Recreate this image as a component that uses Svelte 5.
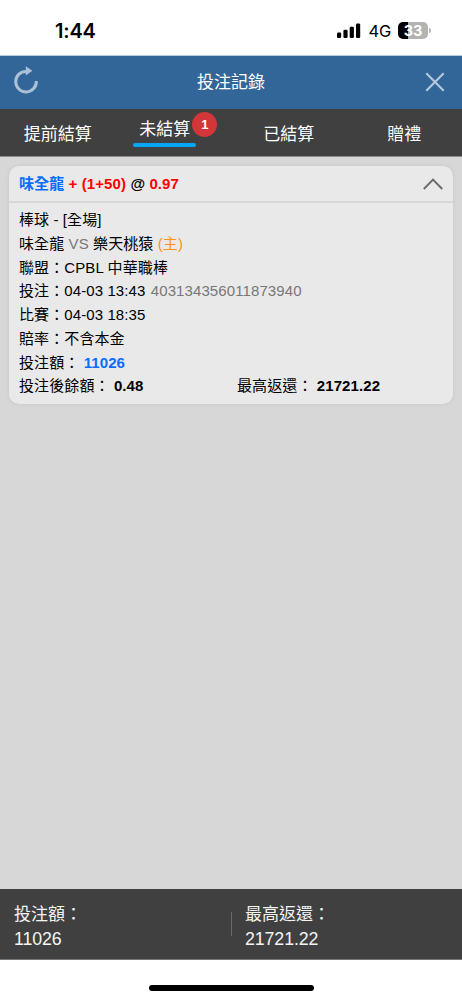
<script lang="ts">
  type Tab = { id: string; label: string; count?: number }

  const tabs: Tab[] = [
    { id: 'early', label: '提前結算' },
    { id: 'open', label: '未結算', count: 1 },
    { id: 'settled', label: '已結算' },
    { id: 'gift', label: '贈禮' },
  ]

  const bet = {
    pick: '味全龍',
    line: '+ (1+50)',
    odds: '0.97',
    market: '棒球 - [全場]',
    home: '樂天桃猿',
    away: '味全龍',
    league: 'CPBL 中華職棒',
    placedAt: '04-03 13:43',
    ticket: '403134356011873940',
    startsAt: '04-03 18:35',
    oddsType: '不含本金',
    stake: '11026',
    remaining: '0.48',
    maxReturn: '21721.22',
  }

  let active = $state('open')
  let expanded = $state(true)
</script>

<div class="screen">
  <div class="status-bar">
    <span class="time">1:44</span>
    <div class="indicators">
      <svg class="signal" width="24" height="16" viewBox="0 0 24 16" aria-hidden="true">
        <rect x="0" y="9.6" width="4.2" height="5.4" rx="1.2" />
        <rect x="6.4" y="6.8" width="4.2" height="8.2" rx="1.2" />
        <rect x="12.7" y="3.8" width="4.2" height="11.2" rx="1.2" />
        <rect x="19" y="0.4" width="4.2" height="14.6" rx="1.2" />
      </svg>
      <span class="network">4G</span>
      <div class="battery"><span>33</span></div>
      <i class="battery-cap"></i>
    </div>
  </div>

  <header>
    <button aria-label="重新整理">
      <svg width="26" height="28" viewBox="0 0 26 28" aria-hidden="true">
        <path d="M13.5 5.4A10.3 10.3 0 1 0 23.3 15" fill="none" stroke="#abc1d7" stroke-width="3" />
        <path d="M12.8 0.2L19.4 4.7L12.8 9.4Z" fill="#abc1d7" />
      </svg>
    </button>
    <h1>投注記錄</h1>
    <button class="close" aria-label="關閉">
      <svg width="20" height="20" viewBox="0 0 20 20" aria-hidden="true">
        <path d="M1.3 1.3L18.7 18.7M18.7 1.3L1.3 18.7" fill="none" stroke="#b5c8db" stroke-width="2.2" />
      </svg>
    </button>
  </header>

  <nav>
    {#each tabs as tab (tab.id)}
      <button class="tab" class:active={active === tab.id} onclick={() => (active = tab.id)}>
        <span class="label">
          {tab.label}
          {#if tab.count}<b class="badge">{tab.count}</b>{/if}
        </span>
      </button>
    {/each}
  </nav>

  <main>
    <article>
      <button class="summary" onclick={() => (expanded = !expanded)}>
        <strong>
          <span class="blue">{bet.pick}</span>
          <span class="red">{bet.line}</span> @ <span class="red">{bet.odds}</span>
        </strong>
        <svg class:collapsed={!expanded} width="20" height="12" viewBox="0 0 20 12" aria-hidden="true">
          <path d="M0.8 11L10 1.6L19.2 11" fill="none" stroke="#6c6c6c" stroke-width="2" />
        </svg>
      </button>
      {#if expanded}
        <div class="details">
          <p>{bet.market}</p>
          <p>{bet.away} <span class="muted">VS</span> {bet.home} <span class="orange">(主)</span></p>
          <p>聯盟：{bet.league}</p>
          <p>投注：{bet.placedAt} <span class="muted ticket">{bet.ticket}</span></p>
          <p>比賽：{bet.startsAt}</p>
          <p>賠率：{bet.oddsType}</p>
          <p>投注額： <b class="blue">{bet.stake}</b></p>
          <div class="pair">
            <p>投注後餘額： <b>{bet.remaining}</b></p>
            <p>最高返還： <b>{bet.maxReturn}</b></p>
          </div>
        </div>
      {/if}
    </article>
  </main>

  <footer>
    <div class="total">
      <span>投注額：</span>
      <span class="amount">{bet.stake}</span>
    </div>
    <div class="total">
      <span>最高返還：</span>
      <span class="amount">{bet.maxReturn}</span>
    </div>
  </footer>

  <div class="home"><i></i></div>
</div>

<style>
  :global(body) {
    background: #fff;
  }

  .screen {
    display: flex;
    flex-direction: column;
    width: 462px;
    height: 1000px;
    overflow: hidden;
    color: #000;
    font-family: 'Liberation Sans', 'Noto Sans CJK TC', sans-serif;
    font-size: 15px;
  }

  button {
    padding: 0;
    border: 0;
    background: none;
    color: inherit;
    font: inherit;
    letter-spacing: inherit;
  }

  svg {
    display: block;
  }

  h1,
  p {
    margin: 0;
  }

  .status-bar {
    box-sizing: border-box;
    display: flex;
    flex: none;
    align-items: center;
    justify-content: space-between;
    height: 56px;
    padding: 6px 31px 0 55px;
    border-bottom: 1px solid #b4c9dc;
  }

  .time {
    font: 600 20px/24px Inter, sans-serif;
    letter-spacing: -0.2px;
  }

  .indicators {
    display: flex;
    align-items: center;
  }

  .network {
    margin-left: 7px;
    font: 400 16.5px/20px Inter, sans-serif;
    letter-spacing: -0.2px;
  }

  .battery {
    width: 30px;
    height: 17px;
    margin-left: 7px;
    border-radius: 5px;
    background: linear-gradient(90deg, #000 33%, #b3b3b3 33%);
    color: #fff;
    font: 700 14.5px/17px Inter, sans-serif;
    text-align: center;
  }

  .battery-cap {
    width: 2px;
    height: 5px;
    margin-left: 1px;
    border-radius: 0 2px 2px 0;
    background: #b3b3b3;
  }

  header {
    display: flex;
    flex: none;
    align-items: center;
    justify-content: space-between;
    box-sizing: border-box;
    height: 53px;
    padding: 0 17px 0 13px;
    background: #326698;
    color: #fff;
  }

  header button:first-child {
    margin-top: -5px;
  }

  .close {
    margin-top: -1px;
  }

  h1 {
    margin-right: 2px;
    font-size: 17px;
    font-weight: 400;
    line-height: 24px;
  }

  nav {
    display: grid;
    flex: none;
    grid-template-columns: repeat(4, 1fr);
    box-sizing: border-box;
    height: 48px;
    border-bottom: 1px solid #8b8b8b;
    background: #404040;
    color: #fff;
  }

  .tab {
    display: flex;
    align-items: center;
    justify-content: center;
    padding-top: 4px;
    font-size: 17px;
    line-height: 24px;
  }

  .label {
    position: relative;
  }

  .tab.active {
    padding-top: 0;
    padding-right: 17px;
  }

  .tab.active .label {
    padding: 0 6px 2px;
  }

  .tab.active .label::after {
    display: block;
    height: 4px;
    margin: 1px -6px -2px;
    border-radius: 2px;
    background: #05a5f8;
    content: '';
  }

  .badge {
    position: absolute;
    top: -6px;
    right: -21px;
    width: 25px;
    height: 25px;
    border-radius: 50%;
    background: #d33639;
    font-size: 13px;
    line-height: 25px;
    text-align: center;
  }

  main {
    flex: 1;
    padding: 9px 9px 0;
    background: #d7d7d7;
  }

  article {
    overflow: hidden;
    border-radius: 10px;
    background: #e9e9e9;
    box-shadow: 0 0 4px rgb(0 0 0 / 8%);
    letter-spacing: 0.1px;
  }

  .summary {
    display: flex;
    align-items: center;
    justify-content: space-between;
    box-sizing: border-box;
    width: 100%;
    height: 37px;
    padding: 0 10px;
    border-bottom: 2px solid #d7d7d7;
    line-height: 24px;
  }

  .collapsed {
    transform: rotate(180deg);
  }

  .details {
    padding: 5px 10px 6px;
    line-height: 23.75px;
  }

  .pair {
    display: grid;
    grid-template-columns: 218px 1fr;
  }

  .blue {
    color: #096cff;
  }

  .red {
    color: #f00;
  }

  .orange {
    color: #ff9214;
  }

  .muted {
    color: #777;
  }

  .ticket {
    margin-left: 1px;
  }

  footer {
    display: grid;
    flex: none;
    grid-template-columns: 1fr 1fr;
    align-items: center;
    box-sizing: border-box;
    height: 71px;
    border-bottom: 1px solid #777;
    background: #404040;
    color: #f4f4f4;
    font-size: 17px;
    line-height: 24px;
  }

  .total {
    display: flex;
    flex-direction: column;
    justify-content: center;
    height: 24px;
    padding-left: 14px;
  }

  .total span {
    transform: translateY(3px);
  }

  .total .amount {
    font-size: 17.8px;
    letter-spacing: -0.1px;
  }

  .total + .total {
    padding-left: 13px;
    border-left: 1px solid #6a6a6a;
  }

  .home {
    display: flex;
    flex: none;
    align-items: center;
    justify-content: center;
    height: 40px;
    padding-top: 15px;
    box-sizing: border-box;
  }

  .home i {
    width: 165px;
    height: 6px;
    border-radius: 3px;
    background: #000;
  }
</style>
